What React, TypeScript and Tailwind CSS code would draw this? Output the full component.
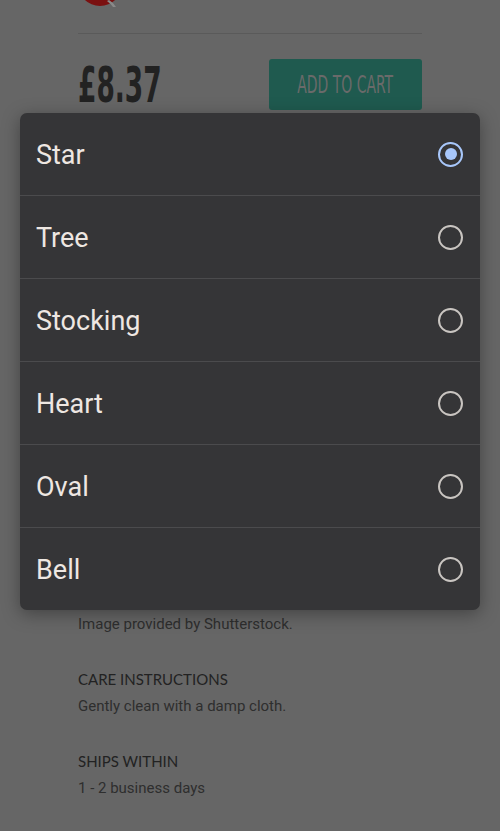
import { useState } from "react";

const shapes = ["Star", "Tree", "Stocking", "Heart", "Oval", "Bell"];

const condensed = { fontFamily: "'Liberation Sans Narrow', 'DejaVu Sans Condensed', sans-serif" };

function Radio({ checked }: { checked: boolean }) {
  return (
    <span
      className={
        "flex h-[25px] w-[25px] items-center justify-center rounded-full border-[2.5px] " +
        (checked ? "border-[#a8c7fa]" : "border-[#c9c5c1]")
      }
    >
      {checked ? <span className="h-[12px] w-[12px] rounded-full bg-[#a8c7fa]" /> : null}
    </span>
  );
}

// Brand mark, scrolled mostly out of view at the top of the page.
function BrandMark() {
  return (
    <svg width="46" height="7" viewBox="0 16 46 7" className="block">
      <circle cx="21" cy="0" r="22" fill="#7a1010" />
      <path d="M30 16 Q35 19 37 23 L34 23 Q32 20 28 17 Z" fill="#8a8a8a" />
    </svg>
  );
}

export default function App() {
  const [selected, setSelected] = useState("Star");

  return (
    <div className="relative min-h-[831px] w-[500px] overflow-hidden bg-[#666666]" style={{ fontFamily: "Roboto, 'Noto Sans', sans-serif" }}>
      <div className="flex flex-col px-[78px]">
        <div className="ml-[1px]">
          <BrandMark />
        </div>
        <div className="mt-[26px] h-px bg-[#5a5a5a]" />
        <div className="mt-[25px] flex items-start justify-between">
          <span
            className="mt-[-2px] origin-left scale-x-[0.6] whitespace-nowrap text-[49px] font-bold leading-[58px] text-[#222222]"
            style={condensed}
          >
            £8.37
          </span>
          <button
            type="button"
            className="flex h-[51px] w-[153px] items-center justify-center rounded-[3px] bg-[#1f5a4f] text-[#6a6a6a]"
          >
            <span className="scale-x-[0.62] whitespace-nowrap text-[25px] leading-none" style={condensed}>
              ADD TO CART
            </span>
          </button>
        </div>

        {/* description sits under the open picker */}
        <div className="h-[499px]" />

        <p className="text-[15px] leading-[20px] text-[#2e2e2e]">Image provided by Shutterstock.</p>

        <h3 className="mt-[35px] text-[15px] leading-[20px] text-[#222222]" style={{ fontFamily: "Lato, sans-serif" }}>
          CARE INSTRUCTIONS
        </h3>
        <p className="mt-[7px] text-[15px] leading-[20px] text-[#2e2e2e]">Gently clean with a damp cloth.</p>

        <h3 className="mt-[35px] text-[15px] leading-[20px] text-[#222222]" style={{ fontFamily: "Lato, sans-serif" }}>
          SHIPS WITHIN
        </h3>
        <p className="mt-[7px] text-[15px] leading-[20px] text-[#2e2e2e]">1 - 2 business days</p>
      </div>

      <ul className="absolute left-[20px] top-[113px] w-[460px] overflow-hidden rounded-[7px] bg-[#353537] shadow-[0_4px_18px_rgba(0,0,0,0.35)]">
        {shapes.map((shape, i) => (
          <li key={shape} className={i > 0 ? "border-t border-[#4b4b4d]" : ""}>
            <button
              type="button"
              onClick={() => setSelected(shape)}
              className="flex h-[82px] w-full items-center justify-between pl-[16px] pr-[17px] text-left"
            >
              <span className="pt-[3px] text-[27px] text-[#eee7e2]">{shape}</span>
              <Radio checked={selected === shape} />
            </button>
          </li>
        ))}
      </ul>
    </div>
  );
}
